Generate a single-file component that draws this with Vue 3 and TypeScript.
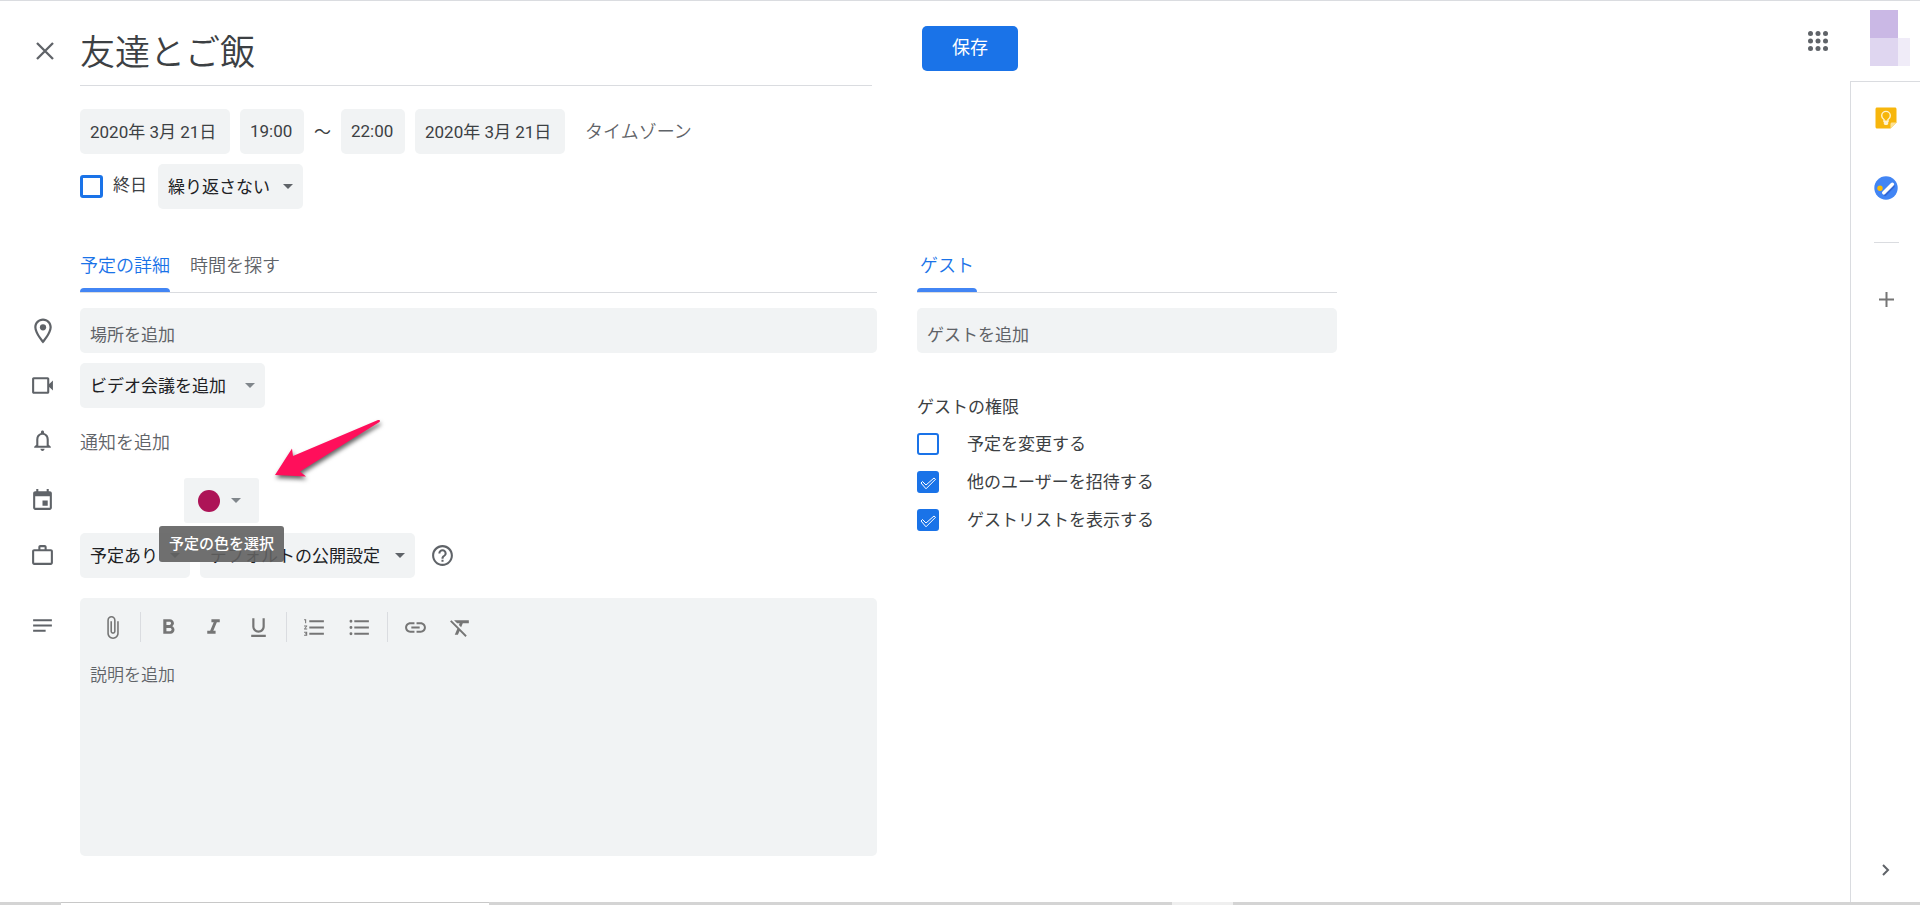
<script setup lang="ts">
import { ref } from 'vue'

interface Permission {
  id: string
  label: string
  checked: boolean
}

interface Tool {
  id: string
  label: string
  path: string
}

const title = ref('友達とご飯')
const startDate = ref('2020年 3月 21日')
const startTime = ref('19:00')
const endTime = ref('22:00')
const endDate = ref('2020年 3月 21日')
const allDay = ref(false)
const location = ref('')
const guest = ref('')
const description = ref('')

const permissions = ref<Permission[]>([
  { id: 'modify', label: '予定を変更する', checked: false },
  { id: 'invite', label: '他のユーザーを招待する', checked: true },
  { id: 'see', label: 'ゲストリストを表示する', checked: true },
])

const toolGroups: Tool[][] = [
  [
    {
      id: 'attach',
      label: '添付ファイル',
      path: 'M16.5 6v11.5c0 2.21-1.79 4-4 4s-4-1.79-4-4V5c0-1.38 1.12-2.5 2.5-2.5s2.5 1.12 2.5 2.5v10.5c0 .55-.45 1-1 1s-1-.45-1-1V6H10v9.5c0 1.38 1.12 2.5 2.5 2.5s2.5-1.12 2.5-2.5V5c0-2.21-1.79-4-4-4S7 2.79 7 5v12.5c0 3.04 2.46 5.5 5.5 5.5s5.5-2.46 5.5-5.5V6h-1.5z',
    },
  ],
  [
    {
      id: 'bold',
      label: '太字',
      path: 'M15.6 10.79c.97-.67 1.65-1.77 1.65-2.79 0-2.26-1.75-4-4-4H7v14h7.04c2.09 0 3.71-1.7 3.71-3.79 0-1.52-.86-2.82-2.15-3.42zM10 6.5h3c.83 0 1.5.67 1.5 1.5s-.67 1.5-1.5 1.5h-3v-3zm3.5 9H10v-3h3.5c.83 0 1.5.67 1.5 1.5s-.67 1.5-1.5 1.5z',
    },
    { id: 'italic', label: '斜体', path: 'M10 4v3h2.21l-3.42 8H6v3h8v-3h-2.21l3.42-8H18V4z' },
    {
      id: 'underline',
      label: '下線',
      path: 'M12 17c3.31 0 6-2.69 6-6V3h-2.1v8c0 2.1-1.7 3.8-3.9 3.8S8.1 13.1 8.1 11V3H6v8c0 3.31 2.69 6 6 6zm-7 2v2h14v-2H5z',
    },
  ],
  [
    {
      id: 'ordered',
      label: '番号付きリスト',
      path: 'M2 17h2v.5H3v1h1v.5H2v1h3v-4H2v1zm1-9h1V4H2v1h1v3zm-1 3h1.8L2 13.1v.9h3v-1H3.2L5 10.9V10H2v1zm5-6v2h14V5H7zm0 14h14v-2H7v2zm0-6h14v-2H7v2z',
    },
    {
      id: 'bulleted',
      label: '箇条書き',
      path: 'M3.8 10.6a1.4 1.4 0 1 0 0 2.8 1.4 1.4 0 0 0 0-2.8zm0-6a1.4 1.4 0 1 0 0 2.8 1.4 1.4 0 0 0 0-2.8zm0 12a1.4 1.4 0 1 0 0 2.8 1.4 1.4 0 0 0 0-2.8zM7 19h14v-2H7v2zm0-6h14v-2H7v2zm0-8v2h14V5H7z',
    },
  ],
  [
    {
      id: 'link',
      label: 'リンクを挿入',
      path: 'M3.9 12c0-1.71 1.39-3.1 3.1-3.1h4V7H7c-2.76 0-5 2.24-5 5s2.24 5 5 5h4v-1.9H7c-1.71 0-3.1-1.39-3.1-3.1zM8 13h8v-2H8v2zm9-6h-4v1.9h4c1.71 0 3.1 1.39 3.1 3.1s-1.39 3.1-3.1 3.1h-4V17h4c2.76 0 5-2.24 5-5s-2.24-5-5-5z',
    },
    {
      id: 'clear',
      label: '書式をクリア',
      path: 'M3.27 5L2 6.27l6.97 6.97L6.5 19h3l1.57-3.66L16.73 21 18 19.73 3.55 5.27 3.27 5zM6 5v.18L8.82 8h2.4l-.72 1.68 2.1 2.1L14.21 8H20V5H6z',
    },
  ],
]
</script>

<template>
  <div class="page">
    <main class="editor">
      <header class="header">
        <button class="icon-cell plain" type="button" aria-label="閉じる">
          <svg class="close" viewBox="0 0 30 30" aria-hidden="true">
            <path d="M7 7l16 16M23 7L7 23" fill="none" stroke="#5f6368" stroke-width="2.3" />
          </svg>
        </button>
        <input v-model="title" class="title" type="text" aria-label="タイトル" />
        <button class="save" type="button">保存</button>
        <button class="apps plain" type="button" aria-label="アプリ">
          <svg viewBox="0 0 20 20" aria-hidden="true">
            <g fill="#5f6368">
              <template v-for="row in 3" :key="row">
                <circle v-for="col in 3" :key="col" :cx="col * 7.5 - 5" :cy="row * 7.5 - 5" r="2.5" />
              </template>
            </g>
          </svg>
        </button>
      </header>

      <section class="schedule">
        <div class="line">
          <input v-model="startDate" class="chip date" type="text" aria-label="開始日" />
          <input v-model="startTime" class="chip time" type="text" aria-label="開始時間" />
          <span class="tilde">～</span>
          <input v-model="endTime" class="chip time" type="text" aria-label="終了時間" />
          <input v-model="endDate" class="chip date" type="text" aria-label="終了日" />
          <button class="plain timezone" type="button">タイムゾーン</button>
        </div>
        <div class="line">
          <input id="all-day" v-model="allDay" class="box thick" type="checkbox" />
          <label class="all-day" for="all-day">終日</label>
          <div class="picker repeat">
            <select aria-label="繰り返し"><option>繰り返さない</option></select>
            <svg class="caret" viewBox="0 0 10 5" aria-hidden="true"><path d="M0 0h10L5 5z" /></svg>
          </div>
        </div>
      </section>

      <div class="columns">
        <section class="details">
          <nav class="tabs">
            <button class="tab active" type="button">予定の詳細</button>
            <button class="tab" type="button">時間を探す</button>
          </nav>

          <div class="row first">
            <span class="icon-cell">
              <svg class="pin" viewBox="0 0 24 24" aria-hidden="true">
                <path fill-rule="evenodd" d="M12 2C8.13 2 5 5.13 5 9c0 5.25 7 13 7 13s7-7.75 7-13c0-3.87-3.13-7-7-7zm0 1.8c2.9 0 5.2 2.3 5.2 5.2 0 3-2.9 7.4-5.2 10.1C9.7 16.4 6.8 12 6.8 9c0-2.9 2.3-5.2 5.2-5.2z" />
                <circle cx="12" cy="9" r="2.5" />
              </svg>
            </span>
            <input v-model="location" class="field" type="text" placeholder="場所を追加" aria-label="場所" />
          </div>

          <div class="row">
            <span class="icon-cell">
              <svg viewBox="0 0 24 24" aria-hidden="true">
                <path fill-rule="evenodd" d="M3.5 4h13.5c.8 0 1.5.7 1.5 1.5V10.5L22 7.2v9.6l-3.5-3.3v5c0 .8-.7 1.5-1.5 1.5h-13.5c-.8 0-1.5-.7-1.5-1.5v-13C2 4.700 2.700 4 3.500 4zM4 6v12h12.500V6z" />
              </svg>
            </span>
            <div class="picker video">
              <select aria-label="ビデオ会議"><option>ビデオ会議を追加</option></select>
              <svg class="caret light" viewBox="0 0 10 5" aria-hidden="true"><path d="M0 0h10L5 5z" /></svg>
            </div>
          </div>

          <div class="row notice">
            <span class="icon-cell">
              <svg viewBox="0 0 24 24" aria-hidden="true">
                <path d="M12 22c1.100 0 2-.9 2-2h-4c0 1.100.9 2 2 2zm6-6v-5c0-3.070-1.630-5.640-4.500-6.320V4c0-.83-.67-1.500-1.500-1.500s-1.500.67-1.500 1.500v.68C7.640 5.360 6 7.920 6 11v5l-2 2v1h16v-1l-2-2zm-2 1H8v-6c0-2.480 1.510-4.500 4-4.500s4 2.020 4 4.500v6z" />
              </svg>
            </span>
            <button class="plain add-notice" type="button">通知を追加</button>
          </div>

          <div class="row calendar">
            <span class="icon-cell">
              <svg viewBox="0 0 24 24" aria-hidden="true">
                <path d="M17 12h-5v5h5v-5zM16 1v2H8V1H6v2H5c-1.110 0-1.990.9-1.990 2L3 19c0 1.100.89 2 2 2h14c1.100 0 2-.9 2-2V5c0-1.100-.9-2-2-2h-1V1h-2zm3 18H5V8h14v11z" />
              </svg>
            </span>
            <div class="color-anchor">
              <button class="color" type="button" aria-label="予定の色" aria-describedby="color-tip">
                <span class="swatch"></span>
                <svg class="caret light" viewBox="0 0 10 5" aria-hidden="true"><path d="M0 0h10L5 5z" /></svg>
              </button>
              <span id="color-tip" class="tooltip" role="tooltip">予定の色を選択</span>
              <svg class="pointer" viewBox="0 0 130 80" aria-hidden="true">
                <path d="M15 65L32 38.500L33 46L118 10Q121 9.500 119.500 12L40 61.500L46 66.500z" />
              </svg>
            </div>
          </div>

          <div class="row">
            <span class="icon-cell">
              <svg viewBox="0 0 24 24" aria-hidden="true">
                <path fill-rule="evenodd" d="M14 6V4h-4v2h4zM4 8v11h16V8H4zm16-2c1.110 0 2 .89 2 2v11c0 1.110-.89 2-2 2H4c-1.110 0-2-.89-2-2V8c0-1.110.89-2 2-2h4V4c0-1.110.89-2 2-2h4c1.110 0 2 .89 2 2v2h4z" />
              </svg>
            </span>
            <div class="line">
              <div class="picker busy">
                <select aria-label="予定の有無"><option>予定あり</option></select>
                <svg class="caret" viewBox="0 0 10 5" aria-hidden="true"><path d="M0 0h10L5 5z" /></svg>
              </div>
              <div class="picker visibility">
                <select aria-label="公開設定"><option>デフォルトの公開設定</option></select>
                <svg class="caret" viewBox="0 0 10 5" aria-hidden="true"><path d="M0 0h10L5 5z" /></svg>
              </div>
              <button class="plain help" type="button" aria-label="ヘルプ">
                <svg viewBox="0 0 24 24" aria-hidden="true">
                  <path d="M11 18h2v-2h-2v2zm1-16C6.480 2 2 6.480 2 12s4.480 10 10 10 10-4.480 10-10S17.520 2 12 2zm0 18c-4.410 0-8-3.590-8-8s3.590-8 8-8 8 3.590 8 8-3.590 8-8 8zm0-14c-2.210 0-4 1.790-4 4h2c0-1.100.9-2 2-2s2 .9 2 2c0 2-3 1.750-3 5h2c0-2.250 3-2.500 3-5 0-2.210-1.790-4-4-4z" />
                </svg>
              </button>
            </div>
          </div>

          <div class="row notes">
            <span class="icon-cell">
              <svg viewBox="0 0 24 24" aria-hidden="true">
                <path d="M3 6h18v2H3zM3 11h18v2H3zM3 16h12v2H3z" />
              </svg>
            </span>
            <div class="description">
              <div class="toolbar" role="toolbar" aria-label="書式">
                <div v-for="(group, index) in toolGroups" :key="index" class="group">
                  <button v-for="tool in group" :key="tool.id" class="plain tool" type="button" :aria-label="tool.label">
                    <svg viewBox="0 0 24 24" aria-hidden="true"><path :d="tool.path" /></svg>
                  </button>
                </div>
              </div>
              <textarea v-model="description" placeholder="説明を追加" aria-label="説明"></textarea>
            </div>
          </div>
        </section>

        <section class="guests">
          <nav class="tabs">
            <button class="tab active guest-tab" type="button">ゲスト</button>
          </nav>
          <input v-model="guest" class="field first" type="text" placeholder="ゲストを追加" aria-label="ゲスト" />
          <h2>ゲストの権限</h2>
          <ul>
            <li v-for="item in permissions" :key="item.id">
              <span class="check">
                <input :id="item.id" v-model="item.checked" class="box" type="checkbox" />
                <svg v-if="item.checked" viewBox="0 0 22 22" aria-hidden="true">
                  <path d="M4 12l1.500-1.500L9 14l8-7 1.500 1.300L9 17.800z" />
                </svg>
              </span>
              <label :for="item.id">{{ item.label }}</label>
            </li>
          </ul>
        </section>
      </div>
    </main>

    <aside class="side">
      <div class="avatar">
        <span class="tone-a"></span>
        <span class="tone-b"></span>
        <span class="tone-c"></span>
      </div>
      <div class="panel">
        <button class="plain keep" type="button" aria-label="Keep">
          <svg viewBox="0 0 24 24" aria-hidden="true">
            <path fill="#f7b60c" d="M3 1.500h18c.8 0 1.500.7 1.500 1.500v13.500l-6 6H3c-.8 0-1.500-.7-1.500-1.500V3c0-.8.7-1.500 1.500-1.500z" />
            <path fill="#fde293" d="M16.500 22.500v-4.500c0-.8.7-1.500 1.500-1.500h4.500z" />
            <path fill="none" stroke="#fff3cf" stroke-width="1.400" d="M10 15.200v-1.700c-1.400-.8-2.300-2.200-2.300-3.800a4.300 4.300 0 0 1 8.600 0c0 1.600-.9 3-2.300 3.800v1.700z" />
            <path fill="#fff3cf" d="M9.800 15.500h4.400v2.500l-1 1h-2.400l-1-1z" />
          </svg>
        </button>
        <button class="plain tasks" type="button" aria-label="ToDo リスト">
          <svg viewBox="0 0 24 24" aria-hidden="true">
            <circle cx="12" cy="12" r="11.700" fill="#4285f4" />
            <path stroke="#3367d6" stroke-width="3.600" stroke-linecap="round" d="M11 18.300l8-8" />
            <circle cx="6" cy="12.300" r="2.700" fill="#fbbc04" />
            <path stroke="#fff" stroke-width="3.600" stroke-linecap="round" d="M9.800 16.800L18.300 8.300" />
          </svg>
        </button>
        <hr />
        <button class="plain plus" type="button" aria-label="アドオンを取得">
          <svg viewBox="0 0 15 15" aria-hidden="true">
            <path d="M7.500 0v15M0 7.500h15" stroke="#757575" stroke-width="2" />
          </svg>
        </button>
        <button class="plain collapse" type="button" aria-label="サイドパネルを非表示">
          <svg viewBox="0 0 12 12" aria-hidden="true">
            <path d="M3 1l5 5-5 5" fill="none" stroke="#5f6368" stroke-width="2" />
          </svg>
        </button>
      </div>
    </aside>

    <footer class="strip" aria-hidden="true">
      <span class="s1"></span>
      <span class="s2"></span>
      <span class="s3"></span>
      <span class="s4"></span>
      <span class="s5"></span>
    </footer>
  </div>
</template>

<style>
body {
  margin: 0;
  background: #fff;
}
</style>

<style scoped>
.page {
  display: grid;
  grid-template-columns: minmax(0, 1fr) 70px;
  grid-template-rows: 1fr 3px;
  box-sizing: border-box;
  min-height: 100vh;
  border-top: 1px solid #dadce0;
  color: #3c4043;
  font-family: Roboto, "Noto Sans CJK JP", sans-serif;
  font-size: 17px;
  line-height: 24px;
}

.page *,
.page *::before {
  box-sizing: border-box;
}

button,
input,
select,
textarea {
  margin: 0;
  border: 0;
  outline: 0;
  font: inherit;
  color: inherit;
}

.plain {
  padding: 0;
  background: none;
}

svg {
  display: block;
  fill: #5f6368;
}

.header {
  display: flex;
  align-items: flex-start;
  padding: 15px 22px 0 0;
}

.icon-cell {
  display: flex;
  flex: none;
  align-items: center;
  justify-content: center;
  width: 80px;
  height: 45px;
  padding-left: 5px;
}

.icon-cell svg {
  width: 25px;
  height: 25px;
}

.icon-cell .pin {
  width: 30px;
  height: 30px;
}

.header .icon-cell {
  height: 70px;
  padding-left: 10px;
}

.icon-cell .close {
  width: 30px;
  height: 30px;
}

.title {
  flex: 0 1 792px;
  min-width: 0;
  height: 70px;
  padding: 0 0 2px;
  border-bottom: 1px solid #dadce0;
  background: none;
  font-size: 35px;
  font-weight: 350;
}

.save {
  width: 96px;
  height: 45px;
  margin: 10px 0 0 50px;
  padding: 0 0 2px;
  border-radius: 5px;
  background: #1a73e8;
  color: #fff;
  font-size: 18px;
  text-align: center;
}

.apps {
  margin: 15px 0 0 auto;
}

.apps svg {
  width: 20px;
  height: 20px;
}

.schedule {
  display: flex;
  flex-direction: column;
  gap: 10px;
  padding: 23px 0 0 80px;
}

.line {
  display: flex;
  align-items: center;
  gap: 10px;
}

.chip {
  height: 45px;
  padding: 0 10px 2px;
  border-radius: 5px;
  background: #f1f3f4;
}

.date {
  width: 150px;
}

.time {
  width: 64px;
}

.tilde {
  width: 17px;
}

.timezone {
  margin-left: 10px;
  color: #5f6368;
  font-size: 18px;
  font-weight: 350;
}

.box {
  display: block;
  flex: none;
  width: 22px;
  height: 22px;
  border: 2px solid #1a73e8;
  border-radius: 3px;
  background: #fff;
  appearance: none;
}

.box.thick {
  width: 23px;
  height: 23px;
  border-width: 3px;
}

.box:checked {
  background: #1a73e8;
}

.all-day {
  margin-right: 1px;
  padding-bottom: 3px;
}

.picker {
  display: grid;
  flex: none;
  align-items: center;
  height: 45px;
  color: #202124;
}

.picker select,
.picker .caret {
  grid-area: 1 / 1;
}

.picker select {
  width: 100%;
  height: 45px;
  padding: 0 20px 0 10px;
  border-radius: 5px;
  background: #f1f3f4;
  appearance: none;
}

.caret {
  width: 10px;
  height: 5px;
  pointer-events: none;
}

.picker .caret {
  justify-self: end;
  margin-right: 10px;
}

.caret.light {
  fill: #80868b;
}

.repeat {
  width: 145px;
}

.video {
  width: 185px;
}

.busy {
  width: 110px;
}

.visibility {
  width: 215px;
}

.columns {
  display: grid;
  grid-template-columns: minmax(0, 877px) minmax(0, 420px);
  gap: 40px;
  padding: 32px 10px 40px 0;
}

.tabs {
  display: flex;
  gap: 20px;
  height: 52px;
  border-bottom: 1px solid #dadce0;
}

.details .tabs {
  margin-left: 80px;
}

.tab {
  position: relative;
  padding: 0 0 2px;
  background: none;
  color: #5f6368;
  font-size: 18px;
  font-weight: 350;
}

.tab.active {
  color: #1a73e8;
}

.tab.active::before {
  content: "";
  position: absolute;
  right: 0;
  bottom: 0;
  left: 0;
  height: 4px;
  border-radius: 4px 4px 0 0;
  background: #4285f4;
}

.guest-tab {
  width: 60px;
}

.row {
  display: flex;
  margin-top: 10px;
}

.row.first,
.field.first {
  margin-top: 15px;
}

.field {
  display: block;
  width: 100%;
  height: 45px;
  padding: 9px 10px 0;
  border-radius: 5px;
  background: #f1f3f4;
}

.field::placeholder,
textarea::placeholder {
  color: #5f6368;
  opacity: 1;
}

.notice {
  height: 50px;
}

.add-notice {
  color: #5f6368;
  font-size: 18px;
  font-weight: 350;
}

.color-anchor {
  position: relative;
  margin-left: 104px;
}

.color {
  display: flex;
  align-items: center;
  gap: 11px;
  width: 75px;
  height: 45px;
  padding: 0 14px;
  border-radius: 3px;
  background: #f1f3f4;
}

.swatch {
  width: 22px;
  height: 22px;
  border-radius: 50%;
  background: #ad1457;
}

.tooltip {
  position: absolute;
  z-index: 1;
  top: 48px;
  left: -25px;
  width: 125px;
  border-radius: 3px;
  background: rgba(97, 97, 97, 0.9);
  color: #fff;
  font-size: 15px;
  font-weight: 500;
  line-height: 36px;
  text-align: center;
  white-space: nowrap;
}

.pointer {
  position: absolute;
  top: -68px;
  left: 76px;
  width: 130px;
  height: 80px;
  fill: #ff0f5b;
  filter: drop-shadow(1px 3px 2px rgba(0, 0, 0, 0.6));
}

.help {
  margin-left: 5px;
}

.help svg {
  width: 25px;
  height: 25px;
}

.row.notes {
  margin-top: 20px;
}

.notes .icon-cell {
  height: 55px;
}

.description {
  display: flex;
  flex: 1;
  flex-direction: column;
  min-width: 0;
  border-radius: 5px;
  background: #f1f3f4;
}

.toolbar {
  display: flex;
  padding: 14px 10px 11px;
}

.group {
  display: flex;
}

.group + .group {
  margin-left: 5px;
  padding-left: 5px;
  border-left: 1px solid #dadce0;
}

.tool {
  display: grid;
  place-items: center;
  width: 45px;
  height: 30px;
}

.tool svg {
  width: 25px;
  height: 25px;
  fill: #757575;
}

textarea {
  display: block;
  width: 100%;
  height: 203px;
  padding: 10px;
  background: none;
  font-weight: 350;
  resize: none;
}

h2 {
  margin: 42px 0 0;
  font-size: 17px;
  font-weight: 400;
}

ul {
  display: grid;
  gap: 14px;
  margin: 13px 0 0;
  padding: 0;
  list-style: none;
}

li {
  display: flex;
  align-items: center;
  gap: 28px;
}

.check {
  display: grid;
}

.check > * {
  grid-area: 1 / 1;
}

.check svg {
  width: 22px;
  height: 22px;
  fill: none;
  stroke: #fff;
  pointer-events: none;
}

.side {
  display: flex;
  flex-direction: column;
}

.avatar {
  display: grid;
  grid-template-columns: 28px 12px;
  grid-template-rows: 28px 28px;
  height: 80px;
  padding: 9px 0 0 20px;
}

.tone-a {
  background: #cab8e5;
}

.tone-b {
  grid-row: 2;
  background: #dfd6f0;
}

.tone-c {
  grid-row: 2;
  background: #f0ecf8;
}

.panel {
  display: flex;
  flex: 1;
  flex-direction: column;
  align-items: center;
  padding: 24px 0 26px 1px;
  border-top: 1px solid #dadce0;
  border-left: 1px solid #dadce0;
}

.keep svg,
.tasks svg {
  width: 24px;
  height: 24px;
}

.tasks {
  margin-top: 46px;
}

hr {
  width: 25px;
  height: 1px;
  margin: 42px 0 49px;
  border: 0;
  background: #dadce0;
}

.plus svg {
  width: 15px;
  height: 15px;
}

.collapse {
  margin-top: auto;
}

.collapse svg {
  width: 12px;
  height: 12px;
}

.strip {
  display: flex;
  grid-column: 1 / -1;
  background: #d4d4d4;
}

.s1,
.s4 {
  flex: 61 1 0;
}

.s2 {
  flex: 428 1 0;
  border-top: 1px solid #c8c8c8;
  background: #fff;
}

.s3 {
  flex: 683 1 0;
}

.s4 {
  background: #efefef;
}

.s5 {
  flex: 687 1 0;
}
</style>
